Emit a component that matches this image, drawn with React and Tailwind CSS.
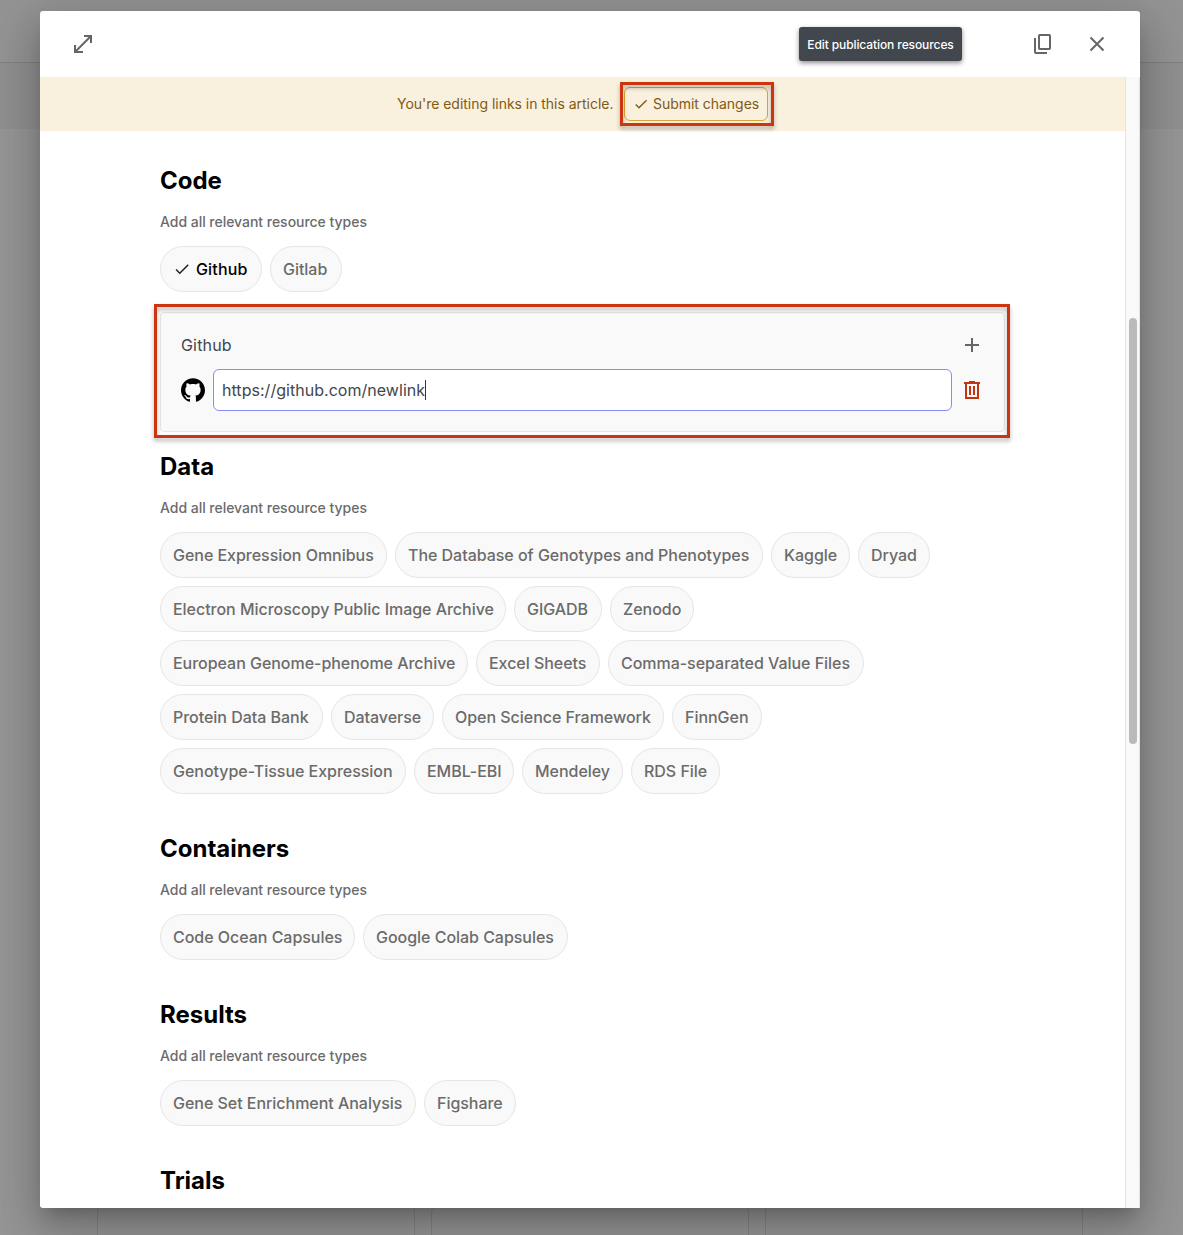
import React from "react";
import { SiGithub } from "react-icons/si";

const CODE_TYPES = [
  { label: "Github", width: "w-[102px]", selected: true },
  { label: "Gitlab", width: "w-[72px]" },
];

const DATA_TYPES = [
  { label: "Gene Expression Omnibus", width: "w-[227px]" },
  { label: "The Database of Genotypes and Phenotypes", width: "w-[368px]" },
  { label: "Kaggle", width: "w-[79px]" },
  { label: "Dryad", width: "w-[72px]" },
  { label: "Electron Microscopy Public Image Archive", width: "w-[346px]" },
  { label: "GIGADB", width: "w-[88px]" },
  { label: "Zenodo", width: "w-[84px]" },
  { label: "European Genome-phenome Archive", width: "w-[308px]" },
  { label: "Excel Sheets", width: "w-[124px]" },
  { label: "Comma-separated Value Files", width: "w-[256px]" },
  { label: "Protein Data Bank", width: "w-[163px]" },
  { label: "Dataverse", width: "w-[103px]" },
  { label: "Open Science Framework", width: "w-[222px]" },
  { label: "FinnGen", width: "w-[90px]" },
  { label: "Genotype-Tissue Expression", width: "w-[246px]" },
  { label: "EMBL-EBI", width: "w-[100px]" },
  { label: "Mendeley", width: "w-[101px]" },
  { label: "RDS File", width: "w-[89px]" },
];

const CONTAINER_TYPES = [
  { label: "Code Ocean Capsules", width: "w-[195px]" },
  { label: "Google Colab Capsules", width: "w-[205px]" },
];

const RESULT_TYPES = [
  { label: "Gene Set Enrichment Analysis", width: "w-[256px]" },
  { label: "Figshare", width: "w-[92px]" },
];

function Check({ className }) {
  return (
    <svg viewBox="0 0 24 24" className={className} fill="currentColor">
      <path d="M9 16.17 4.83 12l-1.42 1.41L9 19 21 7l-1.41-1.41z" />
    </svg>
  );
}

function Chip({ label, width, selected }) {
  return (
    <button
      className={
        "flex h-[46px] items-center rounded-full border border-[#e5e5e5] bg-[#f9f9f9] pl-3 text-base font-medium whitespace-nowrap " +
        width +
        (selected ? " tracking-[0.01em] text-black" : " tracking-[-0.002em] text-[#6b6b6b]")
      }
    >
      {selected && <Check className="mr-[5px] size-[18px] text-[#222]" />}
      {label}
    </button>
  );
}

function Section({ title, items, className, children }) {
  return (
    <section className={className}>
      <h2 className="h-8 pt-px text-2xl leading-8 font-[650] text-black">{title}</h2>
      {items && (
        <>
          <p className="mt-4 text-sm leading-5 font-medium tracking-[-0.002em] text-[#6b6b6b]">
            Add all relevant resource types
          </p>
          <div className="mt-3.5 flex flex-wrap gap-2">
            {items.map((item) => (
              <Chip key={item.label} {...item} />
            ))}
          </div>
        </>
      )}
      {children}
    </section>
  );
}

function Backdrop() {
  return (
    <div className="absolute inset-0 flex flex-col bg-[#959595]">
      <div className="h-[63px] border-b border-[#808080] bg-[#939393]" />
      <div className="h-[66px] bg-[#8f8f8f]" />
      <div className="flex-1" />
      <div className="flex h-[29px] gap-4 pl-[97px]">
        {[0, 1, 2].map((i) => (
          <div key={i} className="w-[318px] rounded-t-md border-x border-[#848484]" />
        ))}
      </div>
    </div>
  );
}

export default function App() {
  return (
    <div className="relative h-[1235px] w-[1183px] overflow-hidden font-['Inter',sans-serif]">
      <Backdrop />
      <div className="relative mt-[11px] ml-10 flex h-[1197px] w-[1100px] flex-col rounded-[3px] bg-white shadow-[0_11px_15px_-7px_rgba(0,0,0,0.2),0_24px_38px_3px_rgba(0,0,0,0.14),0_9px_46px_8px_rgba(0,0,0,0.12)]">
        <header className="flex h-[66px] shrink-0 items-center pr-[31px] pl-[31px] text-[#666]">
          <svg viewBox="0 0 24 24" className="size-6" fill="none" stroke="currentColor" strokeWidth="2">
            <path d="M13 4h7v7M4 13v7h8M20 4 4 20" />
          </svg>
          <div className="ml-auto flex h-[34px] w-[163px] items-center justify-center rounded-[3px] bg-[#42464d] pt-px text-xs font-medium tracking-[-0.008em] whitespace-nowrap text-white shadow-[0_2px_5px_rgba(0,0,0,0.45)]">
            Edit publication resources
          </div>
          <svg viewBox="0 0 20 22" className="ml-[70px] h-[22px] w-5" fill="none" stroke="currentColor" strokeWidth="2">
            <rect x="7" y="2" width="11" height="14" rx="0.7" />
            <path d="M3 5v14q0 1 1 1H15" />
          </svg>
          <svg viewBox="0 0 24 24" className="ml-[33px] size-6" fill="none" stroke="currentColor" strokeWidth="2">
            <path d="m5.5 5.5 13 13m0-13-13 13" />
          </svg>
        </header>
        <div className="flex min-h-0 flex-1">
          <main className="flex w-[1085px] flex-col overflow-hidden">
            <div className="flex h-[54px] shrink-0 items-center bg-[#faf0de] pl-[357px] text-sm tracking-[-0.002em] text-[#805b15]">
              <span className="w-[227px] whitespace-nowrap">You're editing links in this article.</span>
              <div className="relative">
                <button className="flex h-[34px] w-36 items-center rounded-md border border-[#dda531] pl-2 whitespace-nowrap">
                  <Check className="mr-1 size-4" />
                  Submit changes
                </button>
                <div className="absolute -top-[5px] -left-1 h-11 w-[154px] border-3 border-[#cb3510] drop-shadow-[0_3px_2px_rgba(0,0,0,0.3)]" />
              </div>
            </div>
            <div className="ml-[120px] w-[845px] pt-[33px]">
              <Section title="Code" items={CODE_TYPES}>
                <div className="relative mt-5 h-[120px] rounded border border-[#e5e5e5] bg-[#f9f9f9] px-5">
                  <div className="flex h-16 items-center justify-between text-base tracking-[0.01em] text-[#42464d]">
                    Github
                    <svg viewBox="0 0 24 24" className="size-6 text-[#666]" fill="none" stroke="currentColor" strokeWidth="2">
                      <path d="M5 12h14M12 5v14" />
                    </svg>
                  </div>
                  <div className="-mt-2 flex items-center">
                    <SiGithub className="size-6 text-black" />
                    <div className="ml-2 flex h-[42px] w-[739px] items-center rounded-md border border-[#858df5] bg-white px-2 text-base tracking-[0.002em] text-[#42464d]">
                      https://github.com/newlink
                      <span className="h-5 w-px bg-[#333]" />
                    </div>
                    <svg viewBox="0 0 16 18" className="ml-3 h-[18px] w-4 text-[#c4350f]" fill="none" stroke="currentColor" strokeWidth="2">
                      <path d="M0 2h16M5 1h6M2 2v15h12V2M6 5v9M10 5v9" />
                    </svg>
                  </div>
                  <div className="absolute -top-[9px] -left-[7px] h-[134px] w-[856px] border-3 border-[#cb3510] drop-shadow-[0_3px_2px_rgba(0,0,0,0.3)]" />
                </div>
              </Section>
              <Section className="mt-[18px]" title="Data" items={DATA_TYPES} />
              <Section className="mt-[38px]" title="Containers" items={CONTAINER_TYPES} />
              <Section className="mt-[38px]" title="Results" items={RESULT_TYPES} />
              <Section className="mt-[38px]" title="Trials" />
            </div>
          </main>
          <div className="w-[15px] border-x border-[#e3e3e3] bg-[#f9f9f9] pt-[241px] pl-[3px]">
            <div className="h-[426px] w-2 rounded-full bg-[#bababa]" />
          </div>
        </div>
      </div>
    </div>
  );
}
